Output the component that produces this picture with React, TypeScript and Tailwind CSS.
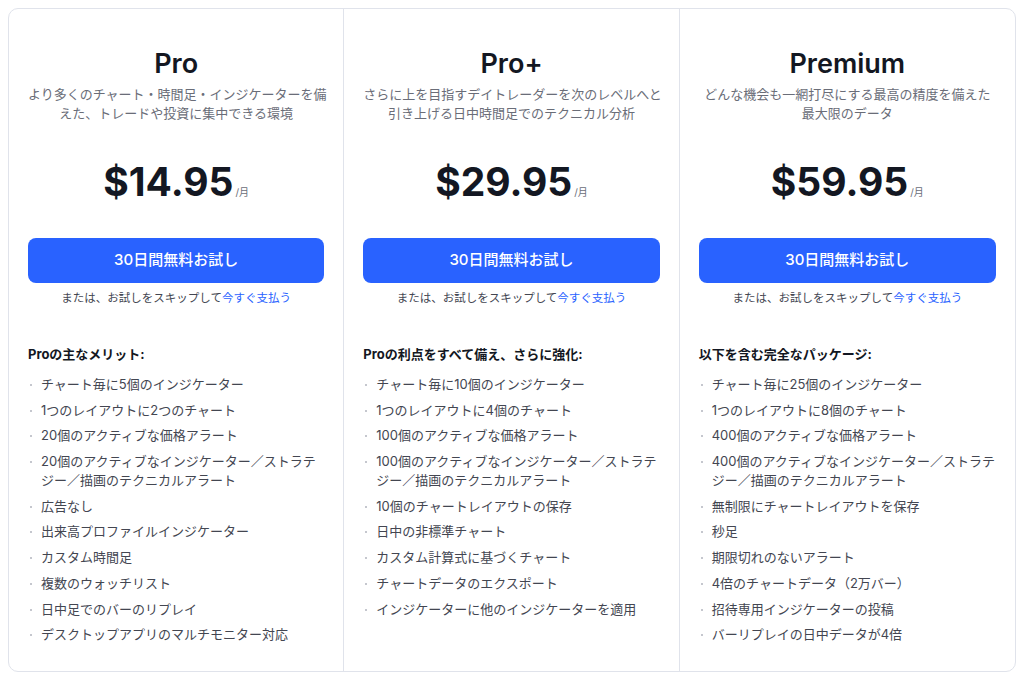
const plans = [
  {
    name: 'Pro',
    desc: ['より多くのチャート・時間足・インジケーターを備', 'えた、トレードや投資に集中できる環境'],
    price: '$14.95',
    heading: 'Proの主なメリット:',
    items: [
      'チャート毎に5個のインジケーター',
      '1つのレイアウトに2つのチャート',
      '20個のアクティブな価格アラート',
      '20個のアクティブなインジケーター／ストラテジー／描画のテクニカルアラート',
      '広告なし',
      '出来高プロファイルインジケーター',
      'カスタム時間足',
      '複数のウォッチリスト',
      '日中足でのバーのリプレイ',
      'デスクトップアプリのマルチモニター対応',
    ],
  },
  {
    name: 'Pro+',
    desc: ['さらに上を目指すデイトレーダーを次のレベルへと', '引き上げる日中時間足でのテクニカル分析'],
    price: '$29.95',
    heading: 'Proの利点をすべて備え、さらに強化:',
    items: [
      'チャート毎に10個のインジケーター',
      '1つのレイアウトに4個のチャート',
      '100個のアクティブな価格アラート',
      '100個のアクティブなインジケーター／ストラテジー／描画のテクニカルアラート',
      '10個のチャートレイアウトの保存',
      '日中の非標準チャート',
      'カスタム計算式に基づくチャート',
      'チャートデータのエクスポート',
      'インジケーターに他のインジケーターを適用',
    ],
  },
  {
    name: 'Premium',
    desc: ['どんな機会も一網打尽にする最高の精度を備えた', '最大限のデータ'],
    price: '$59.95',
    heading: '以下を含む完全なパッケージ:',
    items: [
      'チャート毎に25個のインジケーター',
      '1つのレイアウトに8個のチャート',
      '400個のアクティブな価格アラート',
      '400個のアクティブなインジケーター／ストラテジー／描画のテクニカルアラート',
      '無制限にチャートレイアウトを保存',
      '秒足',
      '期限切れのないアラート',
      '4倍のチャートデータ（2万バー）',
      '招待専用インジケーターの投稿',
      'バーリプレイの日中データが4倍',
    ],
  },
]

export default function App() {
  return (
    <div
      className="min-h-screen bg-white p-2"
      style={{ fontFamily: 'Inter, "Noto Sans CJK JP", sans-serif' }}
    >
      <div className="grid h-[664px] grid-cols-3 divide-x divide-[#e0e3eb] rounded-[10px] border border-[#e0e3eb]">
        {plans.map((p) => (
          <div key={p.name} className="flex flex-col px-[19px] pt-[37px]">
            <h2 className="text-center text-[27px] leading-[36px] font-semibold text-[#131722]">
              {p.name}
            </h2>
            <p className="mt-[3px] text-center text-[13px] leading-[19px] whitespace-nowrap text-[#6a6d78]">
              {p.desc[0]}
              <br />
              {p.desc[1]}
            </p>
            <div className="mt-[37px] flex items-baseline justify-center">
              <span className="text-[39px] leading-[44px] font-bold text-[#131722]">
                {p.price}
              </span>
              <span className="ml-[2px] text-[10px] text-[#6a6d78]">/月</span>
            </div>
            <button className="mt-[34px] h-[45px] w-full rounded-[8px] bg-[#2962ff] text-[15px] font-medium text-white">
              30日間無料お試し
            </button>
            <p className="mt-[7px] text-center text-[11.5px] leading-[16px] text-[#434651]">
              または、お試しをスキップして<span className="text-[#2962ff]">今すぐ支払う</span>
            </p>
            <h3 className="mt-[38px] text-[13px] leading-[20px] font-bold text-[#131722]">
              {p.heading}
            </h3>
            <ul className="mt-[11px] flex flex-col gap-[6.7px]">
              {p.items.map((it) => (
                <li key={it} className="flex text-[13px] leading-[19px] text-[#434651]">
                  <span className="mt-[9px] ml-[2px] mr-[9px] h-[2px] w-[2px] shrink-0 rounded-full bg-[#b2b5be]" />
                  <span>{it}</span>
                </li>
              ))}
            </ul>
          </div>
        ))}
      </div>
    </div>
  )
}
